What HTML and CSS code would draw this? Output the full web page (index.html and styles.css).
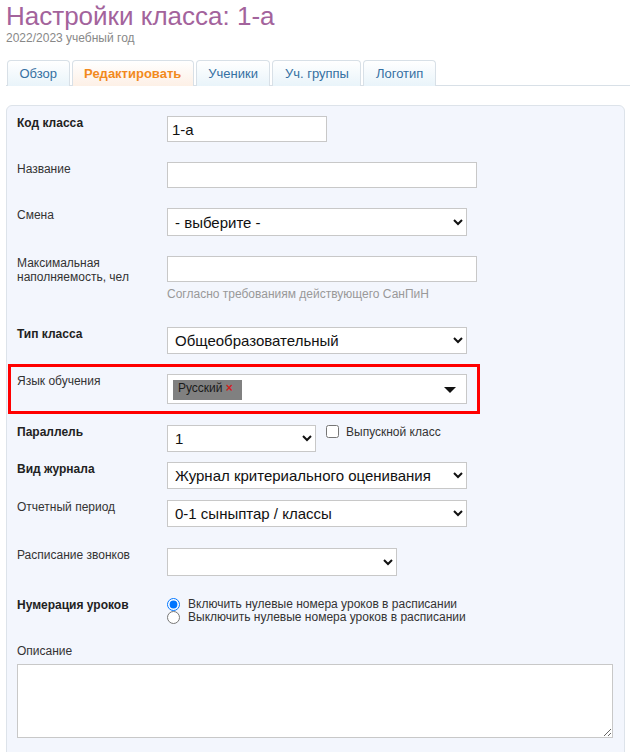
FILE: index.html
```html
<!DOCTYPE html>
<html lang="ru">
<head>
<meta charset="utf-8">
<title>Настройки класса</title>
<link rel="stylesheet" href="styles.css">
</head>
<body>
<div class="page">
  <h1 class="title">Настройки класса: 1-а</h1>
  <div class="subtitle">2022/2023 учебный год</div>

  <ul class="tabs">
    <li class="tab">Обзор</li>
    <li class="tab active">Редактировать</li>
    <li class="tab">Ученики</li>
    <li class="tab">Уч. группы</li>
    <li class="tab">Логотип</li>
  </ul>

  <div class="panel">
    <div class="row r1">
      <label class="lbl bold">Код класса</label>
      <input class="inp w160" type="text" value="1-а">
    </div>
    <div class="row r2">
      <label class="lbl">Название</label>
      <input class="inp w310" type="text">
    </div>
    <div class="row r3">
      <label class="lbl">Смена</label>
      <select class="sel w300"><option>- выберите -</option></select>
    </div>
    <div class="row r4">
      <label class="lbl">Максимальная наполняемость, чел</label>
      <div class="ctl">
        <input class="inp w310" type="text">
        <div class="hint">Согласно требованиям действующего СанПиН</div>
      </div>
    </div>
    <div class="row r5">
      <label class="lbl bold">Тип класса</label>
      <select class="sel w300 h27"><option>Общеобразовательный</option></select>
    </div>
    <div class="row highlight">
      <label class="lbl">Язык обучения</label>
      <div class="multi">
        <span class="tag">Русский <span class="x">×</span></span>
        <svg class="caret" width="12" height="7" viewBox="0 0 12 7"><path d="M0 0H12L6 6Z" fill="#111"/></svg>
      </div>
    </div>
    <div class="row r7">
      <label class="lbl bold">Параллель</label>
      <select class="sel w149 h27"><option>1</option></select>
      <label class="check"><input type="checkbox" class="cb"> Выпускной класс</label>
    </div>
    <div class="row r8">
      <label class="lbl bold">Вид журнала</label>
      <select class="sel w300 h27"><option>Журнал критериального оценивания</option></select>
    </div>
    <div class="row r9">
      <label class="lbl">Отчетный период</label>
      <select class="sel w300 h27"><option>0-1 сыныптар / классы</option></select>
    </div>
    <div class="row r10">
      <label class="lbl">Расписание звонков</label>
      <select class="sel w230"><option></option></select>
    </div>
    <div class="row r11">
      <label class="lbl bold">Нумерация уроков</label>
      <div class="radios">
        <label class="radio"><input type="radio" name="n" checked> Включить нулевые номера уроков в расписании</label>
        <label class="radio"><input type="radio" name="n"> Выключить нулевые номера уроков в расписании</label>
      </div>
    </div>
    <div class="desc">
      <div class="lbl">Описание</div>
      <textarea class="ta"></textarea>
    </div>
  </div>
</div>
</body>
</html>
```
FILE: styles.css
```css
html, body {
  margin: 0;
  padding: 0;
  background: #fff;
  font-family: "Liberation Sans", Arial, sans-serif;
  color: #333;
}
.page {
  padding-left: 6px;
  height: 752px;
  overflow: hidden;
  box-sizing: border-box;
}
.title {
  margin: 0;
  padding-top: 1px;
  font-size: 26px;
  line-height: 30px;
  font-weight: normal;
  color: #a3639c;
}
.subtitle {
  font-size: 12px;
  line-height: 14px;
  color: #888;
}
.tabs {
  list-style: none;
  margin: 15px 0 0 0;
  padding: 0 0 0 1px;
  display: flex;
  gap: 2px;
  border-bottom: 1px solid #d8e0e7;
  height: 25px;
}
.tab {
  box-sizing: border-box;
  padding: 0 11.5px;
  font-size: 13px;
  line-height: 25px;
  color: #3570a2;
  border: 1px solid #d8e0e7;
  border-bottom: none;
  border-radius: 4px 4px 0 0;
  background: linear-gradient(#ffffff, #e9f4fa);
  margin-bottom: -1px;
  height: 26px;
}
.tab.active {
  color: #f28a1d;
  font-weight: bold;
  background: linear-gradient(#ffffff, #fdf0e6);
}
.panel {
  margin-top: 19px;
  width: 619px;
  box-sizing: border-box;
  border: 1px solid #dde3ea;
  border-radius: 6px;
  background: #f3f6fd;
  padding-top: 10px;
  height: 700px;
}
.row {
  display: flex;
  align-items: flex-start;
  padding-left: 10px;
}
.lbl {
  width: 150px;
  flex: none;
  box-sizing: border-box;
  padding-right: 10px;
  padding-top: 0;
  font-size: 12px;
  line-height: 14px;
  color: #333;
}
.lbl.bold {
  font-weight: bold;
  color: #222;
}
.inp {
  box-sizing: border-box;
  height: 26px;
  border: 1px solid #c8c8c8;
  background: #fff;
  font-family: "Liberation Sans", Arial, sans-serif;
  font-size: 15px;
  padding: 0 4px;
  color: #111;
  margin: 0;
  outline: none;
}
.sel {
  box-sizing: border-box;
  height: 28px;
  border: 1px solid #c8c8c8;
  background-color: #fff;
  border-radius: 0;
  font-family: "Liberation Sans", Arial, sans-serif;
  font-size: 15px;
  padding: 0 3px;
  color: #111;
  margin: 0;
}
.h27 { height: 27px; }
.w160 { width: 160px; }
.w310 { width: 310px; }
.w300 { width: 300px; }
.w149 { width: 149px; }
.w230 { width: 230px; }
.r2, .r3, .r4 { margin-top: 20px; }
.r5 { margin-top: 26px; }
.hint {
  font-size: 12px;
  line-height: 14px;
  color: #999;
  margin-top: 5px;
}
.highlight {
  margin-top: 10px;
  margin-left: 1px;
  width: 472px;
  box-sizing: border-box;
  border: 3px solid #f00;
  padding: 7px 0 7px 6px;
  height: 50px;
}
.multi {
  position: relative;
  box-sizing: border-box;
  width: 300px;
  height: 30px;
  border: 1px solid #c8c8c8;
  background: #fff;
  padding: 3px 5px;
}
.tag {
  display: inline-block;
  height: 20px;
  width: 69px;
  box-sizing: border-box;
  background: #808080;
  color: #1a1a1a;
  font-size: 12px;
  line-height: 16px;
  padding: 0 0 0 5px;
}
.tag .x {
  color: #d02020;
  font-weight: bold;
  font-size: 12px;
}
.caret {
  position: absolute;
  right: 10px;
  top: 12px;
}
.r7 { margin-top: 11px; }
.check {
  display: flex;
  align-items: flex-start;
  margin-left: 10px;
  font-size: 12px;
  line-height: 14px;
  color: #333;
  gap: 7px;
}
.cb {
  margin: 0;
  width: 13px;
  height: 13px;
}
.r8 { margin-top: 10px; }
.r9 { margin-top: 11px; }
.r10 { margin-top: 21px; }
.r11 { margin-top: 22px; }
.radios {
  display: flex;
  flex-direction: column;
}
.radio {
  display: flex;
  align-items: center;
  gap: 8px;
  font-size: 12px;
  line-height: 13px;
  color: #333;
}
.radio input {
  margin: 0;
  width: 13px;
  height: 13px;
}
.desc {
  margin-top: 20px;
  padding-left: 10px;
}
.desc .lbl {
  width: auto;
}
.ta {
  display: block;
  margin-top: 6px;
  box-sizing: border-box;
  width: 596px;
  height: 74px;
  border: 1px solid #c8c8c8;
  background: #fff;
  resize: both;
}
```
